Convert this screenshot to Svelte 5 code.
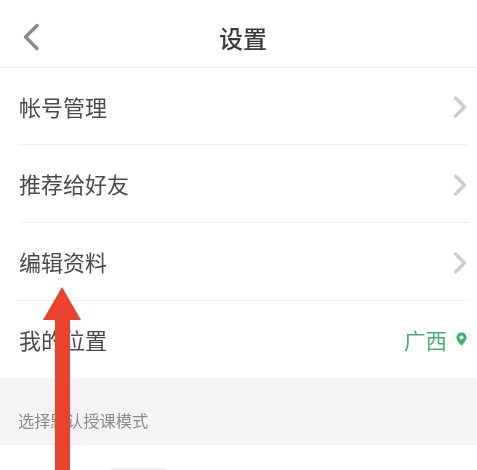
<script>
  const rows = [
    { label: '帐号管理' },
    { label: '推荐给好友' },
    { label: '编辑资料' },
    { label: '我的位置', place: '广西' }
  ];
</script>

<div class="page">
  <header>
    <svg class="back" width="18" height="28" viewBox="0 0 18 28" aria-hidden="true">
      <path d="M15 2.5 3.5 14 15 25.5" />
    </svg>
    <h1>设置</h1>
  </header>

  <ul>
    {#each rows as row}
      <li>
        <span class="label">{row.label}</span>
        {#if row.place}
          <span class="place">
            {row.place}
            <svg width="11" height="14" viewBox="0 0 11 14" aria-hidden="true">
              <path fill-rule="evenodd" d="M5.500 0.500a5 5 0 0 1 5 5C10.500 9 5.500 13.500 5.500 13.500S0.500 9 0.500 5.500A5 5 0 0 1 5.500 0.500Zm0 3a2 2 0 1 0 0 4 2 2 0 0 0 0-4Z" />
            </svg>
          </span>
        {:else}
          <svg class="chevron" width="14" height="22" viewBox="0 0 14 22" aria-hidden="true">
            <path d="M2.500 2 11.500 11 2.500 20" />
          </svg>
        {/if}
      </li>
    {/each}
  </ul>

  <p class="section">选择默认授课模式</p>
  <div class="next"></div>

  <div class="arrow" aria-hidden="true">
    <div class="head"></div>
    <div class="shaft"></div>
  </div>
</div>

<style>
  :global(body) {
    margin: 0;
    background: #fff;
  }

  .page {
    position: relative;
    height: 470px;
    overflow: hidden;
    background: #fff;
    font-family: "Noto Sans CJK SC", "Liberation Sans", sans-serif;
    color: #4a4a4a;
    filter: blur(0.4px);
  }

  header {
    position: relative;
    display: flex;
    align-items: center;
    justify-content: center;
    height: 67px;
    padding-left: 9px;
    border-bottom: 1px solid #ebebeb;
  }

  .back {
    position: absolute;
    left: 22px;
    top: 23px;
  }

  .back path {
    fill: none;
    stroke: #8a8a8a;
    stroke-width: 3.5;
    stroke-linecap: round;
    stroke-linejoin: round;
  }

  h1 {
    margin: 0;
    font-size: 24px;
    font-weight: 500;
    line-height: 1;
    color: #3a3a3a;
    transform: translateY(4px);
  }

  ul {
    list-style: none;
    margin: 0;
    padding: 0;
  }

  li {
    display: flex;
    align-items: center;
    justify-content: space-between;
    box-sizing: border-box;
    height: 78px;
    margin-left: 18px;
    margin-right: 8px;
    padding-left: 1px;
    padding-bottom: 1px;
    border-bottom: 1px solid #f0f0f0;
  }

  li:first-child {
    height: 77px;
  }

  li:last-child {
    border-bottom: 0;
    height: 77px;
  }

  .label {
    font-size: 22px;
  }

  .chevron {
    margin-right: 2px;
    margin-top: 3px;
  }

  .chevron path {
    fill: none;
    stroke: #cdcdcd;
    stroke-width: 3.5;
    stroke-linecap: round;
    stroke-linejoin: round;
  }

  .place {
    display: flex;
    align-items: center;
    gap: 9px;
    font-size: 21.500px;
    color: #4cae70;
    margin-right: 2px;
  }

  .place svg {
    fill: #35b56a;
  }

  .section {
    box-sizing: border-box;
    height: 67px;
    margin: 0;
    padding: 31px 0 0 18px;
    background: #f4f4f4;
    font-size: 16.300px;
    line-height: 22px;
    color: #8a8a8a;
  }

  .next {
    width: 56px;
    height: 2px;
    margin: 23px 0 0 111px;
    background: #f0f0f0;
  }

  .arrow {
    position: absolute;
    left: 43px;
    top: 287px;
    width: 38px;
    display: flex;
    flex-direction: column;
    align-items: center;
  }

  .head {
    width: 38px;
    height: 33px;
    background: #e9432f;
    clip-path: polygon(50% 0, 100% 100%, 0 100%);
  }

  .shaft {
    width: 15px;
    height: 150px;
    background: #e9432f;
  }
</style>
